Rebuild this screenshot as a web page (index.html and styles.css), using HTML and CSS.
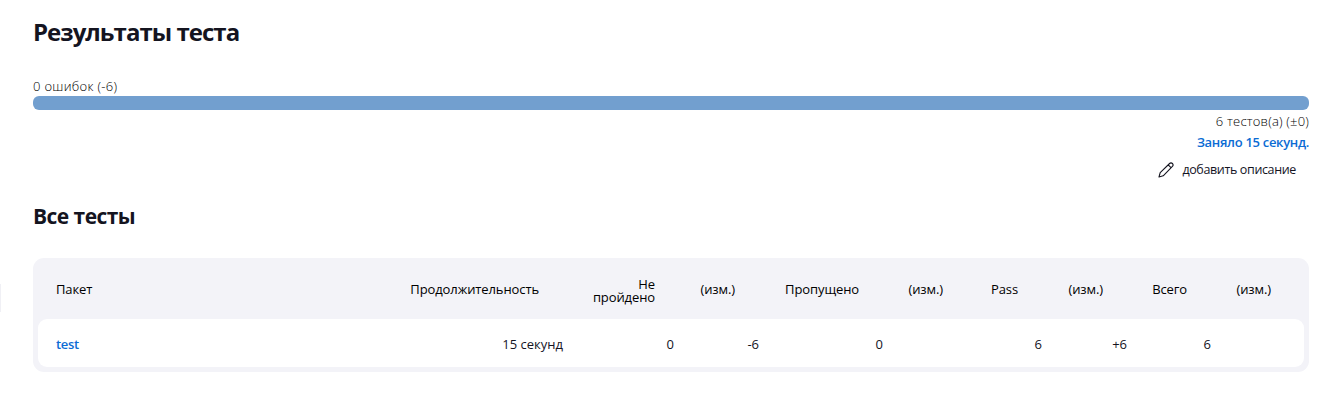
FILE: index.html
```html
<!DOCTYPE html>
<html lang="ru">
<head>
<meta charset="utf-8">
<title>Результаты теста</title>
<link rel="stylesheet" href="styles.css">
</head>
<body>
<div class="side-handle"></div>
<main class="page">
  <h1 class="title"><span>Результаты теста</span></h1>
  <div class="failures"><span>0 ошибок (-6)</span></div>
  <div class="bar"></div>
  <div class="count"><span>6 тестов(а) (±0)</span></div>
  <div class="duration"><a class="link">Заняло 15 секунд.</a></div>
  <div class="actions">
    <button class="describe">
      <svg class="pencil" viewBox="0 0 16 16"><path d="M1 15l1.2-4.3L11.6 1.5a1.9 1.9 0 0 1 2.8 2.8L5.2 13.8zM10.2 2.9l2.8 2.8"/></svg>
      <span>добавить описание</span>
    </button>
  </div>
  <h2 class="subtitle"><span>Все тесты</span></h2>
  <div class="table-wrap">
    <table class="table">
      <colgroup><col class="c-pkg"><col class="c-dur"><col class="c-fail"><col class="c-d1"><col class="c-skip"><col class="c-d2"><col class="c-pass"><col class="c-d3"><col class="c-total"><col class="c-d4"></colgroup>
      <thead>
        <tr><th class="left"><span>Пакет</span></th><th><span>Продолжительность</span></th><th class="wrap">Не<br>пройдено</th><th><span>(изм.)</span></th><th><span>Пропущено</span></th><th><span>(изм.)</span></th><th><span>Pass</span></th><th><span>(изм.)</span></th><th><span>Всего</span></th><th><span>(изм.)</span></th></tr>
      </thead>
      <tbody>
        <tr><td class="left"><a class="link">test</a></td><td><span>15 секунд</span></td><td>0</td><td>-6</td><td>0</td><td></td><td>6</td><td>+6</td><td>6</td><td></td></tr>
      </tbody>
    </table>
  </div>
</main>
</body>
</html>
```
FILE: styles.css
```css
* { box-sizing: border-box; }
body { margin: 0; background: #fff; color: #14141f; font: 13px/20px "Open Sans", "Noto Sans", sans-serif; }
.side-handle { position: absolute; left: 0; top: 284px; width: 1px; height: 28px; background: #f0f0f5; }
.page { padding: 16px 14px 0 33px; }
.title { margin: 0; font-size: 24px; line-height: 32px; font-weight: 700; letter-spacing: -0.97px; }
.failures { margin-top: 28px; color: #000; font-weight: 300; letter-spacing: 0.3px; }
.bar { height: 14px; border-radius: 6px; background: #729fcf; }
.count { margin-top: 1px; color: #000; text-align: right; font-weight: 300; letter-spacing: 0.2px; }
.duration { margin-top: 1px; text-align: right; letter-spacing: -0.3px; }
.link { color: #0b6cd4; font-weight: 600; text-decoration: none; }
.actions { display: flex; justify-content: flex-end; padding-right: 13px; }
.describe { display: flex; align-items: center; gap: 8px; height: 36px; padding: 0; border: 0; background: none; color: #14141f; font: inherit; font-size: 12.5px; letter-spacing: -0.36px; }
.pencil { width: 16px; height: 16px; fill: none; stroke: #14141f; stroke-width: 1.1; stroke-linecap: round; stroke-linejoin: round; }
.subtitle { margin: 14px 0 0; font-size: 21px; line-height: 28px; font-weight: 700; letter-spacing: -0.55px; }
.table-wrap { margin-top: 28px; height: 114px; padding: 0 5px 5px; border-radius: 11px; background: #f3f3f8; }
.table { width: 1266px; table-layout: fixed; border-collapse: separate; border-spacing: 0; }
.c-pkg { width: 354px; }
.c-dur { width: 180px; }
.c-fail { width: 111px; }
.c-d1 { width: 85px; }
.c-skip { width: 124px; }
.c-d2 { width: 84px; }
.c-pass { width: 75px; }
.c-d3 { width: 85px; }
.c-total { width: 84px; }
.c-d4 { width: 84px; }
th { height: 61px; padding: 2px 33px 0 0; color: #000; font-weight: 400; line-height: 13px; letter-spacing: -0.1px; text-align: right; white-space: nowrap; }
th.wrap { padding-top: 5px; padding-right: 28px; }
td { height: 48px; padding: 2px 9px 0 0; background: #fff; text-align: right; }
.left { padding-left: 18px; text-align: left; }
td.left { letter-spacing: -0.3px; }
td:first-child { border-radius: 9px 0 0 9px; }
td:last-child { border-radius: 0 9px 9px 0; }
```
